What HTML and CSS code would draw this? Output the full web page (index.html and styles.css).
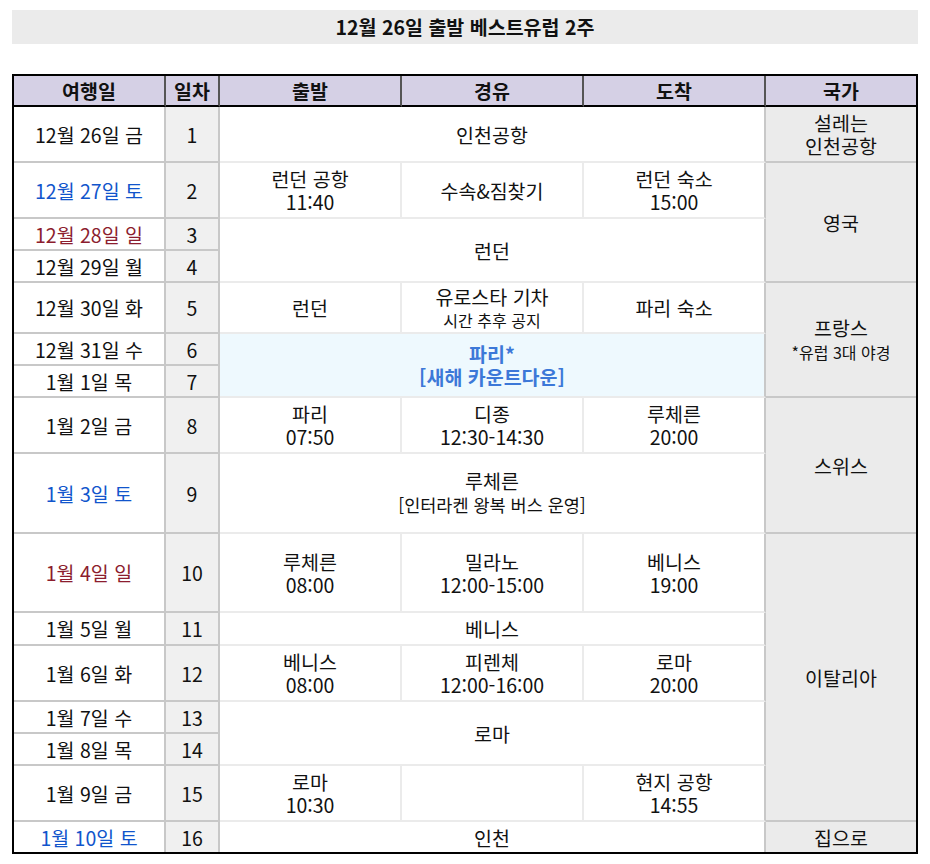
FILE: index.html
```html
<!DOCTYPE html>
<html lang="ko">
<head>
<meta charset="utf-8">
<title>12월 26일 출발 베스트유럽 2주</title>
<link rel="stylesheet" href="styles.css">
</head>
<body>
<div class="page">
  <div class="title">12월 26일 출발 베스트유럽 2주</div>
  <table class="sched">
    <colgroup>
      <col class="c-date"><col class="c-day"><col class="c-mid"><col class="c-mid"><col class="c-mid"><col class="c-nation">
    </colgroup>
    <thead>
      <tr class="head">
        <th>여행일</th><th>일차</th><th>출발</th><th>경유</th><th>도착</th><th class="last">국가</th>
      </tr>
    </thead>
    <tbody>
      <tr class="h56">
        <td class="date">12월 26일 금</td><td class="day">1</td>
        <td class="mid end" colspan="3">인천공항</td>
        <td class="nation">설레는<br>인천공항</td>
      </tr>
      <tr class="h56">
        <td class="date sat">12월 27일 토</td><td class="day">2</td>
        <td class="mid">런던 공항<br>11:40</td><td class="mid">수속&amp;짐찾기</td><td class="mid end">런던 숙소<br>15:00</td>
        <td class="nation" rowspan="3">영국</td>
      </tr>
      <tr class="h32">
        <td class="date sun">12월 28일 일</td><td class="day">3</td>
        <td class="mid end" colspan="3" rowspan="2">런던</td>
      </tr>
      <tr class="h32">
        <td class="date">12월 29일 월</td><td class="day">4</td>
      </tr>
      <tr class="h51">
        <td class="date">12월 30일 화</td><td class="day">5</td>
        <td class="mid">런던</td><td class="mid two">유로스타 기차<br><span class="small">시간 추후 공지</span></td><td class="mid end">파리 숙소</td>
        <td class="nation" rowspan="3">프랑스<br><span class="note">*유럽 3대 야경</span></td>
      </tr>
      <tr class="h32">
        <td class="date">12월 31일 수</td><td class="day">6</td>
        <td class="mid end paris" colspan="3" rowspan="2">파리*<br>[새해 카운트다운]</td>
      </tr>
      <tr class="h32">
        <td class="date">1월 1일 목</td><td class="day">7</td>
      </tr>
      <tr class="h56">
        <td class="date">1월 2일 금</td><td class="day">8</td>
        <td class="mid">파리<br>07:50</td><td class="mid">디종<br>12:30-14:30</td><td class="mid end">루체른<br>20:00</td>
        <td class="nation" rowspan="2">스위스</td>
      </tr>
      <tr class="h80">
        <td class="date sat">1월 3일 토</td><td class="day">9</td>
        <td class="mid end" colspan="3">루체른<br><span class="sub">[인터라켄 왕복 버스 운영]</span></td>
      </tr>
      <tr class="h79">
        <td class="date sun">1월 4일 일</td><td class="day">10</td>
        <td class="mid">루체른<br>08:00</td><td class="mid">밀라노<br>12:00-15:00</td><td class="mid end">베니스<br>19:00</td>
        <td class="nation" rowspan="6">이탈리아</td>
      </tr>
      <tr class="h33">
        <td class="date">1월 5일 월</td><td class="day">11</td>
        <td class="mid end" colspan="3">베니스</td>
      </tr>
      <tr class="h56">
        <td class="date">1월 6일 화</td><td class="day">12</td>
        <td class="mid">베니스<br>08:00</td><td class="mid">피렌체<br>12:00-16:00</td><td class="mid end">로마<br>20:00</td>
      </tr>
      <tr class="h32">
        <td class="date">1월 7일 수</td><td class="day">13</td>
        <td class="mid end" colspan="3" rowspan="2">로마</td>
      </tr>
      <tr class="h32">
        <td class="date">1월 8일 목</td><td class="day">14</td>
      </tr>
      <tr class="h56">
        <td class="date">1월 9일 금</td><td class="day">15</td>
        <td class="mid">로마<br>10:30</td><td class="mid"></td><td class="mid end">현지 공항<br>14:55</td>
      </tr>
      <tr class="h31 lastrow">
        <td class="date sat">1월 10일 토</td><td class="day">16</td>
        <td class="mid end" colspan="3">인천</td>
        <td class="nation">집으로</td>
      </tr>
    </tbody>
  </table>
</div>
</body>
</html>
```
FILE: styles.css
```css
* { box-sizing: border-box; }
html, body { margin: 0; padding: 0; background: #fff; }
body {
  font-family: "Noto Sans CJK KR", "Noto Sans", sans-serif;
  color: #111;
}
.page { padding: 10px 12px 0 12px; }
.title {
  background: #ebebeb;
  height: 34px;
  line-height: 34px;
  text-align: center;
  font-weight: 700;
  font-size: 19.5px;
  color: #111;
}
.sched {
  margin-top: 30px;
  width: 906px;
  table-layout: fixed;
  border-collapse: separate;
  border-spacing: 0;
  border: 2px solid #000;
  font-size: 19.5px;
  line-height: 23px;
}
.c-date { width: 152px; }
.c-day { width: 54px; }
.c-mid { width: 182px; }
.c-nation { width: 150px; }
th, td {
  padding: 0;
  text-align: center;
  vertical-align: middle;
  font-weight: 400;
  overflow: hidden;
}
.head { height: 31px; }
.head th {
  background: #d5d0e5;
  font-weight: 700;
  border-bottom: 2px solid #000;
  border-right: 2px solid #555;
}
.head th.last { border-right: 0; }
.h31 { height: 30px; }
.h32 { height: 32px; }
.h33 { height: 33px; }
.h51 { height: 51px; }
.h56 { height: 56px; }
.h79 { height: 79px; }
.h80 { height: 80px; }
.date {
  border-right: 2px solid #c8c8c8;
  border-bottom: 2px solid #c8c8c8;
}
.day {
  background: #f0f0f0;
  border-right: 2px solid #c8c8c8;
  border-bottom: 2px solid #c8c8c8;
}
.mid {
  border-right: 2px solid #ebebeb;
  border-bottom: 2px solid #ebebeb;
}
.mid.end { border-right: 2px solid #c8c8c8; }
.nation {
  background: #ebebeb;
  border-bottom: 2px solid #c8c8c8;
}
.lastrow td { border-bottom: 0; }
.sat { color: #1155cc; }
.sun { color: #8c1d2e; }
.paris {
  background: #eef9fe;
  color: #3c78d8;
  font-weight: 700;
}
.two { line-height: 22px; }
.small { font-size: 16px; line-height: 18px; display: inline-block; }
.note { font-size: 16px; line-height: 22px; display: inline-block; }
.sub { font-size: 17.5px; line-height: 24px; }
```
